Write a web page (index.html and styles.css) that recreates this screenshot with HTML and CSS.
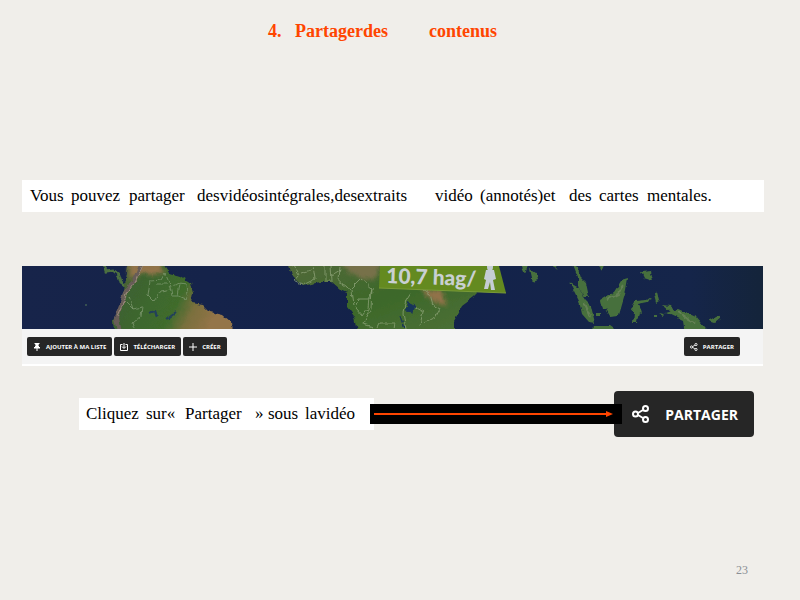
FILE: index.html
```html
<!DOCTYPE html>
<html lang="fr">
<head>
<meta charset="utf-8">
<title>Partager des contenus</title>
<link rel="stylesheet" href="styles.css">
</head>
<body>
<main class="slide">
  <h1 class="title"><span>4.</span><span>Partagerdes</span><span>contenus</span></h1>

  <p class="note intro"><span>Vous</span> <span>pouvez</span> <span>partager</span> <span>desvidéosintégrales,desextraits</span> <span>vidéo</span> <span>(annotés)et</span> <span>des</span> <span>cartes</span> <span>mentales.</span></p>

  <section class="player">
    <svg class="map" viewBox="0 0 741 63" preserveAspectRatio="xMidYMid slice" role="img" aria-label="Carte du monde">
      <defs>
        <linearGradient id="sea" x1="0" x2="1" y1="0" y2="0"><stop offset="0" stop-color="#17244a"/><stop offset=".5" stop-color="#13224a"/><stop offset=".9" stop-color="#15254a"/><stop offset="1" stop-color="#14243a"/></linearGradient>
        <linearGradient id="south" x1="0" x2="1" y1="0" y2=".3"><stop offset="0" stop-color="#65653e"/><stop offset=".25" stop-color="#3d6330"/><stop offset=".65" stop-color="#3f6c2c"/><stop offset=".8" stop-color="#796f3d"/><stop offset="1" stop-color="#947448"/></linearGradient>
        <linearGradient id="africa" x1="0" x2="1" y1="0" y2="1"><stop offset="0" stop-color="#53693a"/><stop offset=".5" stop-color="#3c6829"/><stop offset="1" stop-color="#4f7138"/></linearGradient>
        <filter id="soft"><feGaussianBlur stdDeviation="2"/></filter>
        <filter id="coast" x="0" y="0" width="741" height="63" filterUnits="userSpaceOnUse"><feTurbulence type="fractalNoise" baseFrequency=".15" numOctaves="2" seed="4"/><feDisplacementMap in="SourceGraphic" scale="5" xChannelSelector="R" yChannelSelector="G"/><feGaussianBlur stdDeviation=".5"/></filter>
      </defs>
      <rect width="741" height="63" fill="url(#sea)"/>
      <g filter="url(#coast)">
        <path d="M81 -4L84 5L91 4L97 9L99 16L103 19" fill="none" stroke="#4b7040" stroke-width="3"/>
        <path d="M107 -4L140 -4L147 7L158 10L169 17L171 27L169 37L181 39L188 46L201 49L209 56L210 67L92 67L91 54L98 43L101 29L103 18Z" fill="url(#south)"/>
        <path d="M107 -4H136L143 7L128 9L121 7L108 14Z" fill="#92734a" filter="url(#soft)"/>
        <path d="M120 -4L112 15L104 25L99 39L94 52L97 67" fill="none" stroke="#675d59" stroke-width="4"/>
        <path d="M122 -4L113 16L105 27L100 40L95 51" fill="none" stroke="#9b8c7b" stroke-width="1"/>
        <g fill="none" stroke="#809b72" stroke-width="1" opacity=".75">
          <path d="M128 15L139 14L143 7L149 21L151 30L157 30L164 33L166 28M128 15L126 29L132 35L139 25L149 23M150 20L158 17L164 18L165 28M104 36L111 43L120 41L119 50L111 57L113 63M107 31L111 43M158 17L156 30M134 18L145 18"/>
        </g>
        <path d="M127 47L133 45L136 51M145 53L154 46" fill="none" stroke="#23405a" stroke-width="2"/>
        <circle cx="64" cy="39" r="1" fill="#405e53"/>

        <path d="M266 -4L270 9L281 20L298 16L310 16L318 23L325 26L325 41L332 50L335 67H432V55L440 40L452 31L459 24L454 -4Z" fill="url(#africa)"/>
        <path d="M318 -4H358L356 11L342 14L324 4Z" fill="#77714a" filter="url(#soft)"/>
        <path d="M398 22L420 25L425 40L413 37Z" fill="#91724a" filter="url(#soft)"/>
        <g fill="none" stroke="#8fa47a" stroke-width="1" opacity=".75">
          <path d="M272 0L277 9L272 15L281 19L293 13L291 0M303 0L303 15L310 15L309 0M318 0L317 16L328 24L339 13L350 22L348 33L337 33L334 42L341 50L346 43L347 31M330 24L332 39M350 22L349 43L341 58L351 61M355 63L358 57L373 57L372 63M389 27L384 35L381 47L384 63M399 21L408 28L411 39L418 43L413 52L403 57M279 7L289 4M310 9L318 4M390 40L401 46L398 59"/>
        </g>
        <path d="M387 36L393 39L391 46L384 45ZM378 49L381 61L383 63" fill="#19345a" stroke="#19345a" stroke-width="1"/>

        <g fill="#47703c">
          <path d="M498 -4H507L503 7ZM508 3L514 7L516 14L511 16ZM528 -4H537L534 4ZM550 -4L556 2L559 12L564 17L567 31L562 31L556 20L556 11ZM548 17L557 22L563 34L569 40L573 57L567 56L560 48L557 35ZM575 -4H583L579 5ZM619 6L629 5L631 15L622 12ZM571 60L588 60L598 67H570Z"/>
          <path d="M606 13L604 25L597 49L588 50L584 43L580 43L578 34L586 29L592 26L599 15Z"/>
          <path d="M613 35L625 34L629 31L626 36L616 38L620 47L617 46L615 57L611 57L612 46L609 42ZM641 39L649 40L652 45L650 47ZM644 47L656 43L674 51L682 61L687 67H663L661 55Z"/>
          <path d="M687 55L696 50L699 52L693 57ZM631 49H634V51H631ZM636 47L643 48L641 50ZM632 28L635 26L637 34L634 36ZM575 47H579V51H575Z"/>
        </g>
        <path d="M585 33L596 28L601 19M656 46L667 54L674 58M562 38L568 51" stroke="#708760" stroke-width="2" fill="none" opacity=".7"/>
      </g>
      <path d="M358 0H477L484 27L357 22Z" fill="#648a20"/>
      <path d="M357 22L484 27" stroke="#799a38" stroke-width="1"/>
      <text class="map-figure" x="364" y="17" transform="rotate(2 364 17)">10,7 hag/</text>
      <g fill="#c5cdd4"><ellipse cx="468" cy="1" rx="3" ry="4"/><path d="M464 4H472L474 13L471 14L473 24H469L468 16L466 23H462L464 14L462 13Z"/></g>
    </svg>
    <div class="toolbar">
      <button class="tool" type="button"><svg class="mini" viewBox="0 0 8 8"><path d="M2 0H6V1H5V3L7 5H1L3 3V1H2ZM4 5V8" fill="#fff" stroke="#fff"/></svg>AJOUTER À MA LISTE</button>
      <button class="tool" type="button"><svg class="mini" viewBox="0 0 8 8"><path d="M2.5 1.5H.5V7.5H7.5V1.5H5.5M4 0V5M2 3.5L4 5.5L6 3.5" fill="none" stroke="#fff"/></svg>TÉLÉCHARGER</button>
      <button class="tool" type="button"><svg class="mini" viewBox="0 0 8 8"><path d="M4 0V8M0 4H8" stroke="#fff"/></svg>CRÉER</button>
      <button class="tool share" type="button"><svg class="mini" viewBox="0 0 18 18"><use href="#share-icon"/></svg>PARTAGER</button>
    </div>
  </section>

  <section class="step">
    <p class="note step-text"><span>Cliquez</span> <span>sur«</span> <span>Partager</span> <span>»</span> <span>sous</span> <span>lavidéo</span></p>
    <div class="arrow"><span class="line"></span><span class="tip"></span></div>
    <button class="big" type="button"><svg class="icon" viewBox="0 0 18 18"><g id="share-icon" fill="none" stroke="#fff" stroke-width="2"><circle cx="3.5" cy="9" r="2.5"/><circle cx="13.5" cy="3.5" r="2.5"/><circle cx="13.5" cy="14.5" r="2.5"/><path d="M6 8L11 5M6 10L11 13"/></g></svg>PARTAGER</button>
  </section>

  <footer class="page">23</footer>
</main>
</body>
</html>
```
FILE: styles.css
```css
* { box-sizing: border-box; }
body { margin: 0; background: #f0eeea; font-family: "Liberation Serif", serif; }
h1, p { margin: 0; }
button { border: 0; margin: 0; color: #fff; background: #262626; font-family: "Open Sans", sans-serif; font-weight: 700; }
.slide { display: flex; flex-direction: column; min-height: 100vh; padding: 18px 36px 20px 22px; }
.title { display: grid; grid-template-columns: 27px 134px auto; justify-content: start; margin-left: 246px; color: #ff4500; font-size: 18px; line-height: 26px; white-space: nowrap; }
.note { background: #fff; color: #000; font-size: 17px; line-height: 32px; white-space: nowrap; display: grid; justify-content: start; padding-left: 8px; }
.intro { margin-top: 136px; grid-template-columns: 41px 58px 68px 238px 45px 89px 30px 48px auto; }
.player { margin-top: 54px; margin-right: 1px; background: #f4f4f4; border-bottom: 2px solid #fff; }
.map { display: block; width: 100%; height: 63px; }
.map-figure { font-family: Lato, sans-serif; font-weight: 900; font-size: 21px; fill: #c9d0d2; }
.toolbar { display: flex; gap: 2px; padding: 8px 23px 8px 5px; }
.tool { display: flex; align-items: center; gap: 5px; height: 19px; padding: 0 6px; border-radius: 2px; font-size: 6px; line-height: 8px; white-space: nowrap; }
.mini { width: 8px; height: 8px; flex: none; }
.share { margin-left: auto; }
.step { display: flex; align-items: center; margin: 25px 10px 0 57px; }
.step-text { flex: none; width: 295px; padding-left: 7px; grid-template-columns: 60px 39px 70px 13px 37px auto; }
.arrow { position: relative; z-index: 1; display: flex; align-items: center; flex: 1; height: 20px; margin: 0 -8px 0 -4px; padding: 0 9px 0 4px; background: #000; }
.line { flex: 1; height: 2px; background: #ff4500; }
.tip { border: 3px solid transparent; border-left: 7px solid #ff4500; border-right: 0; }
.big { display: flex; align-items: center; gap: 15px; height: 46px; padding: 0 16px 0 18px; border-radius: 4px; font-size: 14px; }
.icon { width: 18px; height: 18px; flex: none; }
.page { margin-top: auto; padding-right: 16px; color: #8b8f95; font-size: 12px; line-height: 20px; text-align: right; }
```
